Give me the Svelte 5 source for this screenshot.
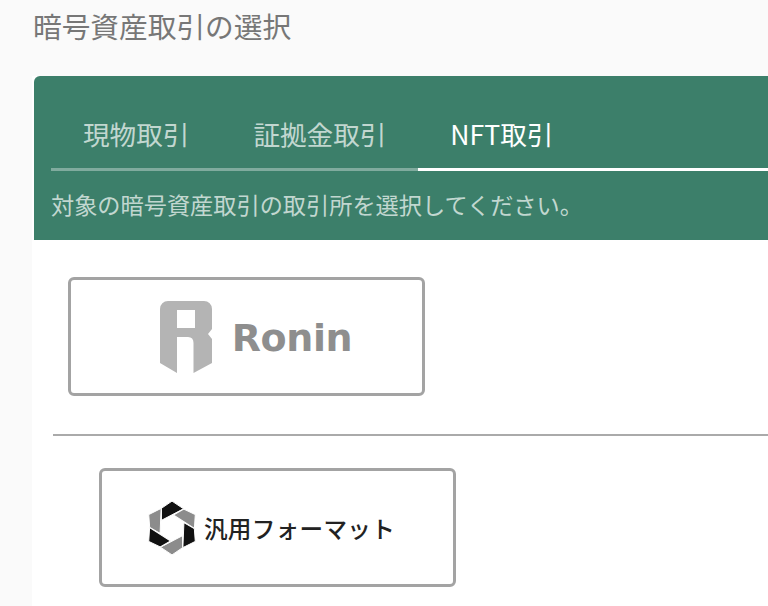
<script lang="ts">
  const tabs = [
    { label: '現物取引', active: false },
    { label: '証拠金取引', active: false },
    { label: 'NFT取引', active: true }
  ];
  const hexAngles = [0, 60, 120, 180, 240, 300];
</script>

<div class="page">
  <h1>暗号資産取引の選択</h1>

  <div class="card">
    <div class="card-header">
      <div class="tabs">
        {#each tabs as tab}
          <div class="tab" class:active={tab.active}>{tab.label}</div>
        {/each}
      </div>
      <p class="hint">対象の暗号資産取引の取引所を選択してください。</p>
    </div>

    <div class="card-body">
      <button class="exchange ronin">
        <svg class="ronin-mark" viewBox="0 0 52 72" aria-hidden="true">
          <path fill-rule="evenodd" d="M8 0H44a8 8 0 0 1 8 8V28L48 33L52 38V62L33.5 72V42Q33.5 36 28 36H17V72L0 62V8A8 8 0 0 1 8 0ZM17 9V27H35V9Z" />
        </svg>
        <span class="ronin-name">Ronin</span>
      </button>

      <hr />

      <button class="exchange generic">
        <svg class="hex-mark" viewBox="-25 -28 50 56" aria-hidden="true">
          {#each hexAngles as angle, i}
            <polygon
              points="-11,-8 -11,-20.5 0,-28 12,-20"
              fill={i % 2 === 0 ? '#111' : '#8c8c8c'}
              stroke="#fff"
              stroke-width="1"
              transform="rotate({angle})"
            />
          {/each}
        </svg>
        <span class="generic-name">汎用フォーマット</span>
      </button>
    </div>
  </div>
</div>

<style>
  :global(body) { background: #fafafa; overflow: hidden; }
  .page { height: 606px; overflow: hidden; font-family: "Noto Sans CJK JP", "Noto Sans", sans-serif; }
  h1 { margin: 0; padding: 6px 0 0 33px; height: 76px; box-sizing: border-box; font-size: 28.7px; line-height: 40px; font-weight: 400; color: #777; }
  .card { margin-left: 32px; height: 530px; background: #fff; }
  .card-header { margin-left: 2px; height: 164px; box-sizing: border-box; padding: 20px 0 0 17px; background: #3c7f6a; border-radius: 6px 0 0 0; }
  .tabs { display: flex; height: 75px; box-sizing: border-box; }
  .tab { padding: 18px 32px 0; font-size: 26.6px; line-height: 40px; color: rgba(255, 255, 255, 0.7); border-bottom: 3px solid rgba(255, 255, 255, 0.35); }
  .tab.active { flex: 1; color: #fff; border-bottom-color: #fff; }
  .hint { margin: 0; padding-top: 16px; font-size: 23.2px; line-height: 34px; color: rgba(255, 255, 255, 0.7); }
  .card-body { padding-top: 37px; }
  .exchange { display: flex; align-items: center; justify-content: center; width: 357px; height: 119px; box-sizing: border-box; padding: 0; background: #fff; border: 3px solid #a3a3a3; border-radius: 6px; font-family: inherit; }
  .ronin { margin-left: 36px; gap: 20px; padding-left: 19px; }
  .ronin-mark { width: 52px; height: 72px; fill: #b4b4b4; }
  .ronin-name { font-family: "DejaVu Sans", sans-serif; font-size: 38px; font-weight: 700; letter-spacing: -0.4px; line-height: 1; color: #8e8e8e; margin-top: 3px; }
  hr { margin: 38px 0 32px 21px; height: 2px; border: 0; background: #aaa; }
  .generic { margin-left: 67px; gap: 8px; padding-right: 12px; }
  .hex-mark { width: 48px; height: 54px; }
  .generic-name { font-size: 23.6px; font-weight: 500; color: #222; letter-spacing: 0.3px; }
</style>
